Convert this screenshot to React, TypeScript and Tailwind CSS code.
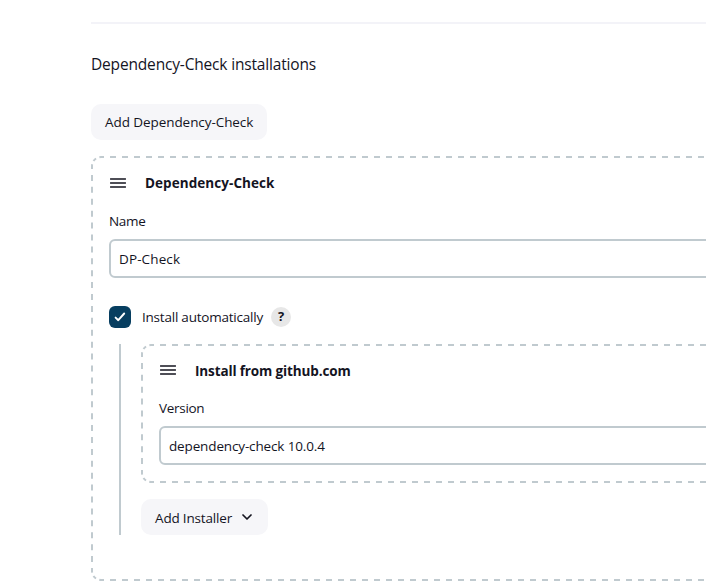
import React from "react";

function DragHandle() {
  return (
    <svg width="16" height="10" viewBox="0 0 16 10" className="shrink-0" aria-hidden="true">
      <path d="M0.5 1H15.5M0.5 5H15.5M0.5 9H15.5" stroke="#14141f" strokeWidth="1.4" strokeLinecap="round" />
    </svg>
  );
}

const RADIUS = 9;
const CORNER_DASH = (Math.PI * RADIUS) / 8;

/* Dashed outline: every side and corner carries a whole number of dashes. */
function DashedOutline({ width, height }: { width: number; height: number }) {
  const l = 1;
  const t = 1;
  const r = width - 1;
  const b = height - 1;
  const q = RADIUS;
  const side = (length: number) => {
    const period = length / Math.round(length / 12);
    return { strokeDasharray: `6 ${period - 6}`, strokeDashoffset: 3 };
  };
  const horizontal = side(width - 20);
  const vertical = side(height - 20);
  return (
    <svg
      className="pointer-events-none absolute top-0 left-0"
      width={width}
      height={height}
      fill="none"
      stroke="#c0cacf"
      strokeWidth="2"
      aria-hidden="true"
    >
      <path d={`M${l + q} ${t}H${r - q}`} {...horizontal} />
      <path d={`M${l + q} ${b}H${r - q}`} {...horizontal} />
      <path d={`M${l} ${t + q}V${b - q}`} {...vertical} />
      <path d={`M${r} ${t + q}V${b - q}`} {...vertical} />
      <g strokeDasharray={CORNER_DASH} strokeDashoffset={CORNER_DASH / 2}>
        <path d={`M${l} ${t + q}A${q} ${q} 0 0 1 ${l + q} ${t}`} />
        <path d={`M${r - q} ${t}A${q} ${q} 0 0 1 ${r} ${t + q}`} />
        <path d={`M${r} ${b - q}A${q} ${q} 0 0 1 ${r - q} ${b}`} />
        <path d={`M${l + q} ${b}A${q} ${q} 0 0 1 ${l} ${b - q}`} />
      </g>
    </svg>
  );
}

function TextField({ label, value, valueClass }: { label: string; value: string; valueClass: string }) {
  return (
    <label className="block">
      <span className="block h-[20px] text-[13.5px] leading-[20px] tracking-[-0.3px]">{label}</span>
      <input
        readOnly
        value={value}
        className={`mt-[8px] block h-[39px] w-full rounded-[6px] border-2 border-[#c0cacf] bg-white px-[8px] text-[13.5px] outline-none ${valueClass}`}
      />
    </label>
  );
}

export default function App() {
  return (
    <main className="h-[583px] w-[706px] overflow-hidden bg-white pl-[91px] pt-[22px] font-['Open_Sans','Noto_Sans',sans-serif] text-[#14141f]">
      <div className="w-[908px]">
        <div className="h-[2px] bg-[#f3f3f8]" />
        <h2 className="mt-[28px] h-[24px] text-[15.5px] leading-[24px] tracking-[-0.17px]">Dependency-Check installations</h2>
        <button className="mt-[28px] flex h-[36px] w-[176px] items-center rounded-[10px] bg-[#f6f6f9] pl-[14px] text-[13.5px] tracking-[-0.07px] whitespace-nowrap">
          Add Dependency-Check
        </button>

        <section className="relative mt-[16px] h-[425px] px-[18px] pt-[17px]">
          <DashedOutline width={908} height={425} />
          <div className="flex h-[20px] items-center">
            <div className="ml-[1px]"><DragHandle /></div>
            <h3 className="ml-[19px] text-[13.5px] leading-[20px] font-bold tracking-[0.06px]">Dependency-Check</h3>
          </div>
          <div className="mt-[18px]">
            <TextField label="Name" value="DP-Check" valueClass="tracking-[0.12px]" />
          </div>

          <div className="mt-[28px] flex h-[22px] items-center">
            <span className="flex size-[22px] items-center justify-center rounded-[6px] bg-[#073e60]">
              <svg width="12" height="10" viewBox="0 0 12 10" fill="none" aria-hidden="true">
                <path d="M1.6 5.6L4.3 8.2L10.2 1.5" stroke="#fff" strokeWidth="1.9" strokeLinecap="round" strokeLinejoin="round" />
              </svg>
            </span>
            <span className="ml-[11px] w-[121px] text-[13.5px] leading-[20px] tracking-[-0.22px] whitespace-nowrap">Install automatically</span>
            <span className="ml-[8px] flex size-[20px] items-center justify-center rounded-full bg-[#e7e7e7] text-[13px] font-bold">?</span>
          </div>

          <div className="mt-[16px] ml-[10px] h-[191px] border-l-2 border-[#c0cacf] pl-[20px]">
            <div className="relative h-[139px] px-[18px] pt-[16px]">
              <DashedOutline width={836} height={139} />
              <div className="flex h-[20px] items-center">
                <div className="ml-[1px]"><DragHandle /></div>
                <h3 className="ml-[19px] pt-[2px] text-[13.5px] leading-[20px] font-bold tracking-[-0.13px]">Install from github.com</h3>
              </div>
              <div className="mt-[18px]">
                <TextField label="Version" value="dependency-check 10.0.4" valueClass="tracking-[-0.14px]" />
              </div>
            </div>
            <button className="mt-[16px] flex h-[36px] w-[127px] items-center rounded-[10px] bg-[#f6f6f9] pl-[14px] text-[13.5px] tracking-[-0.18px] whitespace-nowrap">
              <span className="w-[77px] pt-[2px]">Add Installer</span>
              <svg className="ml-[10px]" width="10" height="7" viewBox="0 0 10 7" fill="none" aria-hidden="true">
                <path d="M1 1L5 5L9 1" stroke="#14141f" strokeWidth="1.7" strokeLinecap="round" strokeLinejoin="round" />
              </svg>
            </button>
          </div>
        </section>
      </div>
    </main>
  );
}
